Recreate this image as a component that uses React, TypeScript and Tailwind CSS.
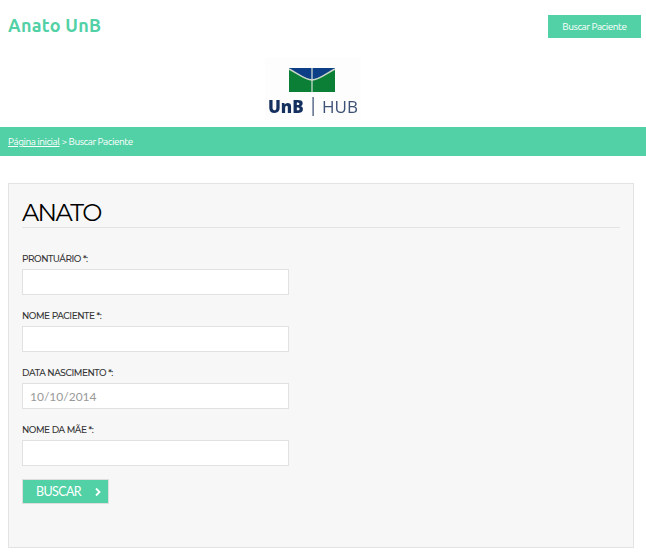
const fields = [
  { label: "PRONTUÁRIO *:", value: "" },
  { label: "NOME PACIENTE *:", value: "" },
  { label: "DATA NASCIMENTO *:", value: "10/10/2014" },
  { label: "NOME DA MÃE *:", value: "" },
];

function UnbLogo() {
  return (
    <svg width="96" height="62" viewBox="0 0 96 62" className="blur-[0.3px]">
      <rect x="0" y="0" width="96" height="62" fill="#fdfdfd" />
      {/* bandeira */}
      <rect x="24" y="10" width="46" height="24" fill="#0b7f35" />
      <path d="M24 10H70V11C62 15 54 22 47 22C40 22 32 15 24 11Z" fill="#0d3f86" />
      <path d="M24 11C32 15 40 22 47 22C54 22 62 15 70 11" fill="none" stroke="#c9d8c8" strokeWidth="1.4" />
      <rect x="46.4" y="10" width="1.2" height="24" fill="#d5e0d8" />
      <text x="3" y="55" fontFamily="'Open Sans', sans-serif" fontWeight="800" fontSize="17" fill="#14305f">
        UnB
      </text>
      <rect x="47.5" y="39" width="1.2" height="19" fill="#33496f" />
      <text x="57" y="55" fontFamily="'Open Sans', sans-serif" fontSize="17" fill="#3d5075">
        HUB
      </text>
    </svg>
  );
}

export default function App() {
  return (
    <div className="min-h-[558px] bg-white font-['Ubuntu','Noto_Sans',sans-serif]">
      {/* Header */}
      <div className="flex items-start justify-between pl-2 pr-[5px] pt-[15px]">
        <h1 className="text-[18px] font-bold leading-[20px] tracking-[0.3px] text-[#51d1a5]">Anato UnB</h1>
        <a className="flex h-[23px] w-[93px] items-center justify-center bg-[#51d1a5] text-[10px] tracking-[-0.45px] text-white">
          Buscar Paciente
        </a>
      </div>

      <div className="mt-5 flex justify-center pr-[21px]">
        <UnbLogo />
      </div>

      {/* Breadcrumb */}
      <div className="mt-[7px] flex h-[29px] items-center bg-[#51d1a5] px-2 text-[10px] tracking-[-0.45px] text-white">
        <a className="underline">Página inicial</a>
        <span className="ml-[2px]">&gt; Buscar Paciente</span>
      </div>

      {/* Form */}
      <div className="mx-2 mt-[27px] h-[365px] w-[626px] border border-[#e3e3e3] bg-[#f7f7f7] px-[13px]">
        <h2 className="mt-[15px] border-b border-[#e3e3e3] pb-[1px] font-['Montserrat','Inter',sans-serif] text-[24px] font-normal leading-[27px] tracking-[-1.6px] text-black">
          ANATO
        </h2>

        <form className="mt-[24px] flex flex-col gap-[14px]">
          {fields.map((field) => (
            <div key={field.label}>
              <label className="block font-['Montserrat','Inter',sans-serif] text-[9px] font-medium leading-[13px] tracking-[-0.45px] text-[#333]">
                {field.label}
              </label>
              <input
                type="text"
                defaultValue={field.value}
                className="mt-[4px] block h-[26px] w-[267px] border border-[#e1e1e1] bg-white px-[7px] font-['Lato',sans-serif] text-[12px] text-[#999]"
              />
            </div>
          ))}
          <button
            type="button"
            className="-mt-px flex h-[25px] w-[87px] items-center justify-between border border-[#dedede] bg-[#51d1a5] pl-[13px] pr-[6px] pt-px font-['Lato',sans-serif] text-[12.5px] tracking-[-0.6px] text-white"
          >
            BUSCAR
            <svg width="8" height="10" viewBox="0 0 8 10" fill="none" stroke="white" strokeWidth="1.8">
              <path d="M2 1.5L5.5 5L2 8.5" />
            </svg>
          </button>
        </form>
      </div>
    </div>
  );
}
